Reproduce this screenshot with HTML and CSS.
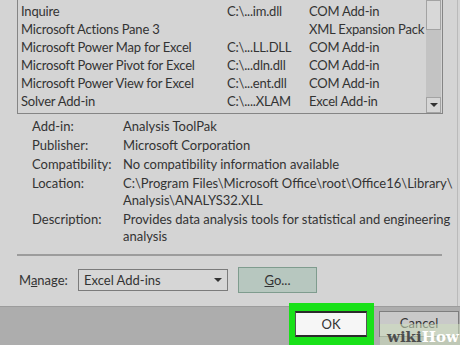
FILE: index.html
```html
<!DOCTYPE html>
<html lang="en">
<head>
  <meta charset="UTF-8" />
  <title>Add-ins</title>
  <link rel="stylesheet" href="styles.css">
</head>
<body>
  <div class="dialog">
    <div class="addins">
      <div class="rows">
        <div class="row"><span>Inquire</span><span>C:\...im.dll</span><span>COM Add-in</span></div>
        <div class="row"><span>Microsoft Actions Pane 3</span><span></span><span>XML Expansion Pack</span></div>
        <div class="row"><span>Microsoft Power Map for Excel</span><span>C:\...LL.DLL</span><span>COM Add-in</span></div>
        <div class="row"><span>Microsoft Power Pivot for Excel</span><span>C:\...dln.dll</span><span>COM Add-in</span></div>
        <div class="row"><span>Microsoft Power View for Excel</span><span>C:\...ent.dll</span><span>COM Add-in</span></div>
        <div class="row"><span>Solver Add-in</span><span>C:\....XLAM</span><span>Excel Add-in</span></div>
      </div>
      <div class="scrollbar">
        <div class="thumb"></div>
        <div class="track"></div>
        <div class="down"><span class="tri"></span></div>
      </div>
    </div>

    <dl class="details">
      <dt>Add-in:</dt><dd>Analysis ToolPak</dd>
      <dt>Publisher:</dt><dd>Microsoft Corporation</dd>
      <dt>Compatibility:</dt><dd>No compatibility information available</dd>
      <dt>Location:</dt><dd>C:\Program Files\Microsoft Office\root\Office16\Library\<br>Analysis\ANALYS32.XLL</dd>
      <dt>Description:</dt><dd>Provides data analysis tools for statistical and engineering<br>analysis</dd>
    </dl>

    <div class="sep"></div>

    <div class="manage">
      <span class="label">M<u>a</u>nage:</span>
      <div class="select"><span>Excel Add-ins</span><span class="tri"></span></div>
      <button class="go"><u>G</u>o...</button>
    </div>
  </div>

  <div class="footer">
    <div class="highlight"><button class="ok">OK</button></div>
    <button class="cancel">Cancel</button>
    <div class="watermark"><span class="wiki">wiki</span><span class="how">How</span></div>
  </div>
</body>
</html>
```

FILE: styles.css
```css
body {
  margin: 0;
  width: 460px;
  height: 345px;
  overflow: hidden;
  background: #adadad;
  font-family: Lato, "Liberation Sans", sans-serif;
  font-size: 13px;
  color: #333;
}
.dialog {
  height: 306px;
  background: linear-gradient(to right, #d4d4d4 457px, #bababa 457px, #bababa 458px, #d4d4d4 458px);
  overflow: hidden;
}
.addins {
  display: flex;
  margin-left: 17px;
  width: 426px;
  height: 114px;
  border: 1px solid #858585;
  border-top: 0;
  box-sizing: border-box;
}
.rows {
  flex: 1;
  padding: 2px 0 0 3px;
  letter-spacing: -0.2px;
}
.row {
  display: grid;
  grid-template-columns: 206px 82px 1fr;
  height: 18px;
  line-height: 18px;
  white-space: nowrap;
}
.scrollbar {
  width: 15px;
  margin-right: 1px;
  display: flex;
  flex-direction: column;
}
.thumb {
  height: 30px;
  border: 1px solid #a3a3a3;
  background: #d8d8d8;
  box-sizing: border-box;
}
.track {
  flex: 1;
  background: #c3c3c3;
}
.down {
  height: 16px;
  border: 1px solid #a3a3a3;
  background: #d6d6d6;
  box-sizing: border-box;
  display: flex;
  align-items: center;
  justify-content: center;
}
.tri {
  width: 0;
  height: 0;
  border-left: 4px solid transparent;
  border-right: 4px solid transparent;
  border-top: 4px solid #333;
}
.details {
  display: grid;
  grid-template-columns: 91px 1fr;
  row-gap: 2px;
  margin: 4px 0 0 32px;
  line-height: 17px;
  white-space: nowrap;
}
.details dd {
  margin: 0;
}
.sep {
  height: 2px;
  background: #9c9c9c;
  margin: 9px 0 0 17px;
  width: 425px;
}
.manage {
  display: flex;
  align-items: center;
  margin: 11px 0 0 19px;
}
.label {
  width: 59px;
}
.select {
  width: 150px;
  height: 22px;
  border: 1px solid #7b7b7b;
  background: #d6d6d6;
  box-sizing: border-box;
  display: flex;
  align-items: center;
  justify-content: space-between;
  padding: 0 5px 0 5px;
}
button {
  font: inherit;
  color: #333;
  padding: 0;
  box-sizing: border-box;
}
.go {
  margin-left: 10px;
  width: 79px;
  height: 26px;
  background: #b7c7bf;
  border: 1px solid #7f9c8e;
}
.footer {
  position: relative;
  display: flex;
  align-items: flex-start;
  height: 39px;
  padding-left: 289px;
  border-top: 1px solid #9c9c9c;
  box-sizing: border-box;
}
.highlight {
  margin-top: -4px;
  width: 85px;
  height: 48px;
  background: #19e119;
  padding: 8px 7px 0 6px;
  box-sizing: border-box;
}
.ok {
  width: 72px;
  height: 26px;
  background: #f6f6f6;
  border: 1px solid #555;
  border-top: 2px solid #2b2b2b;
  border-bottom: 2px solid #2b2b2b;
}
.cancel {
  margin: 4px 0 0 5px;
  width: 80px;
  height: 26px;
  background: #c9c9c9;
  border: 1px solid #7e7e7e;
  padding-bottom: 3px;
  flex-shrink: 0;
}
.watermark {
  position: absolute;
  left: 380px;
  top: 17px;
  width: 80px;
  height: 22px;
  background: rgba(205, 222, 190, 0.55);
  font-family: "DejaVu Serif", serif;
  font-weight: bold;
  font-size: 15px;
  line-height: 26px;
  padding-left: 7px;
  box-sizing: border-box;
  overflow: hidden;
}
.wiki {
  color: #4d4d4d;
}
.how {
  color: #fff;
}
```
